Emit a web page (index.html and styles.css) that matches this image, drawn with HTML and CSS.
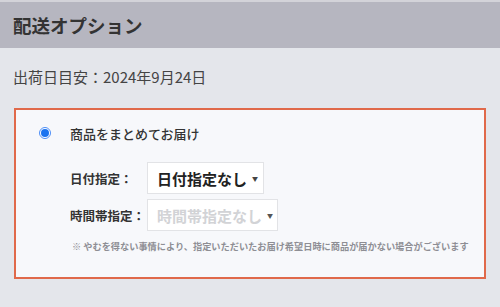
FILE: index.html
```html
<!DOCTYPE html>
<html lang="ja">
<head>
<meta charset="utf-8">
<link rel="stylesheet" href="styles.css">
</head>
<body>
<div class="header">配送オプション</div>
<div class="ship">出荷日目安：2024年9月24日</div>
<div class="card">
  <div class="opt">
    <span class="radio"><span class="dot"></span></span>
    <span class="opt-label">商品をまとめてお届け</span>
  </div>
  <div class="rows">
    <div class="row">
      <span class="lbl">日付指定：</span>
      <div class="sel sel-date"><span>日付指定なし</span><span class="arr">▼</span></div>
    </div>
    <div class="row">
      <span class="lbl">時間帯指定：</span>
      <div class="sel sel-time"><span>時間帯指定なし</span><span class="arr">▼</span></div>
    </div>
  </div>
  <div class="note">※ やむを得ない事情により、指定いただいたお届け希望日時に商品が届かない場合がございます</div>
</div>
</body>
</html>
```
FILE: styles.css
```css
html, body {
  margin: 0;
  padding: 0;
}
body {
  width: 500px;
  height: 307px;
  background: #e4e6eb;
  font-family: "Noto Sans CJK JP", "Noto Sans", sans-serif;
  color: #333;
  overflow: hidden;
}
.header {
  height: 46px;
  border-top: 2px solid #d3d3d9;
  background: #b6b6c0;
  padding-left: 13px;
  font-size: 18.5px;
  font-weight: 700;
  line-height: 46px;
  color: #333;
}
.ship {
  height: 60px;
  padding-left: 13px;
  font-size: 15px;
  line-height: 58px;
  color: #444;
}
.card {
  margin: 0 14px;
  height: 167px;
  border: 2px solid #e0694a;
  background: #f7f8fb;
}
.opt {
  display: flex;
  align-items: center;
  height: 20px;
  margin-top: 13px;
  padding-left: 23px;
}
.radio {
  width: 12px;
  height: 12px;
  border: 1px solid #4d8ef7;
  border-radius: 50%;
  background: #fff;
  display: flex;
  align-items: center;
  justify-content: center;
  box-sizing: border-box;
}
.dot {
  width: 8px;
  height: 8px;
  border-radius: 50%;
  background: #1a73f0;
}
.opt-label {
  margin-left: 19px;
  font-size: 13px;
  font-weight: 500;
  color: #333;
}
.rows {
  display: flex;
  flex-direction: column;
  gap: 5px;
  margin-top: 19px;
  padding-left: 54px;
}
.row {
  display: flex;
  align-items: center;
  height: 32px;
}
.lbl {
  width: 77px;
  flex: none;
  white-space: nowrap;
  font-size: 12.5px;
  font-weight: 700;
  color: #333;
}
.sel {
  height: 32px;
  box-sizing: border-box;
  border: 1px solid #e2e3e6;
  background: #fff;
  display: flex;
  align-items: center;
  padding-left: 9px;
  font-size: 15px;
  font-weight: 700;
  white-space: nowrap;
}
.sel-date {
  width: 117px;
  color: #222;
}
.sel-time {
  width: 131px;
  color: #d2d3d6;
}
.arr {
  font-size: 6px;
  margin-left: 5px;
  color: #444;
}
.sel-time .arr {
  color: #555;
}
.note {
  margin-top: 8px;
  padding-left: 56px;
  font-size: 9.2px;
  font-weight: 700;
  color: #8e8e94;
  white-space: nowrap;
}
```
